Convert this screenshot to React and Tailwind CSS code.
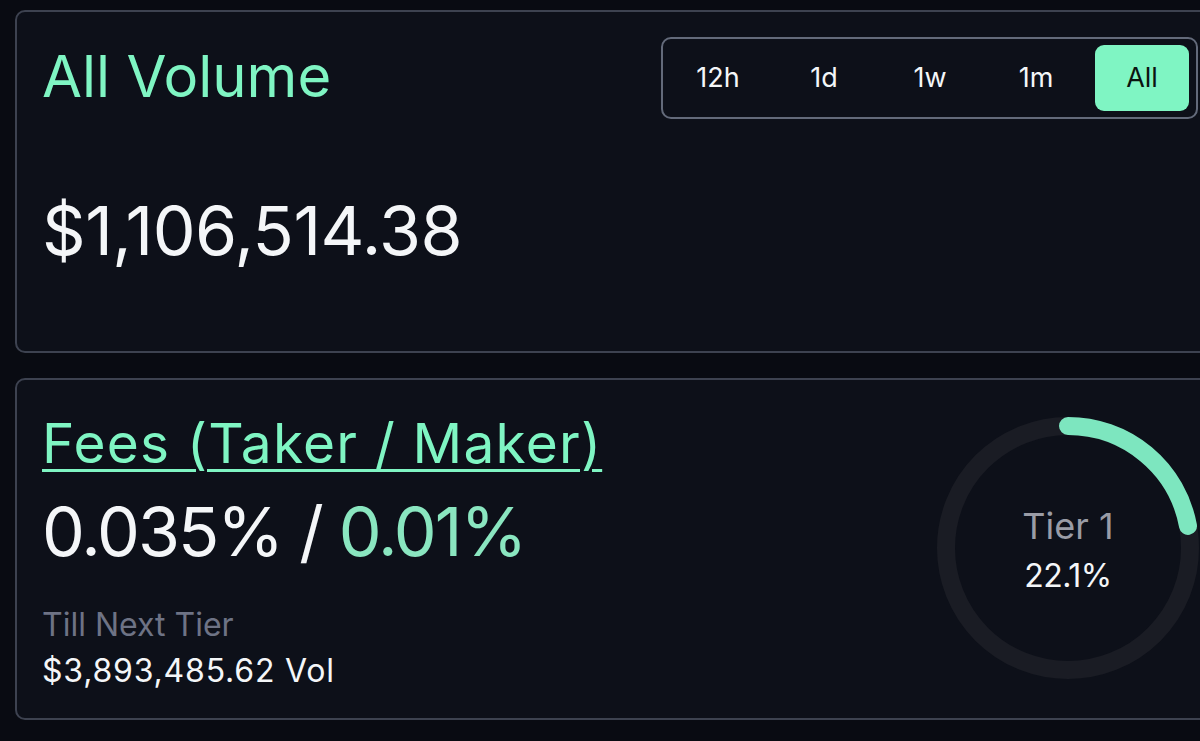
import React from 'react';

const ranges = ['12h', '1d', '1w', '1m', 'All'];

const TierRing = ({ pct }) => {
  const r = 122;
  const c = 2 * Math.PI * r;
  return (
    <div className="relative w-[262px] h-[262px] shrink-0">
      <svg width="262" height="262" viewBox="0 0 262 262" className="absolute inset-0">
        <circle cx="131" cy="131" r={r} fill="none" stroke="#1a1c24" strokeWidth="18" />
        <circle
          cx="131" cy="131" r={r} fill="none" stroke="#7de6bf" strokeWidth="18"
          strokeLinecap="round"
          strokeDasharray={`${(c * pct) / 100} ${c}`}
          transform="rotate(-90 131 131)"
        />
      </svg>
      <div className="absolute inset-0 flex flex-col items-center justify-center pt-[4px]">
        <p className="text-[36px] leading-none text-[#9a9ca6]">Tier 1</p>
        <p className="text-[32px] leading-none text-[#f4f6f8] mt-[16px] tracking-[-0.5px]">{pct}%</p>
      </div>
    </div>
  );
};

export default function App() {
  const active = 'All';

  return (
    <div className="w-[1200px] h-[741px] overflow-hidden bg-[#090b12] pt-[10px] pl-[15px]" style={{ fontFamily: 'Inter, "Noto Sans", sans-serif' }}>
      {/* Volume */}
      <div className="w-[1212px] h-[343px] rounded-[10px] border-2 border-[#3d4250] bg-[#0d1019] flex justify-between pl-[25px] pr-[27px]">
        <div className="flex flex-col">
          <h2 className="mt-[35px] text-[58px] leading-none text-[#7ff5c3]">All Volume</h2>
          <p className="mt-[91px] text-[68px] leading-none text-[#f4f6f8] tracking-[-0.5px]">$1,106,514.38</p>
        </div>
        <div className="mt-[25px] h-[82px] flex items-center gap-[12px] pl-[8px] pr-[7px] rounded-[10px] border-2 border-[#636a7a]">
          {ranges.map((r) => (
            <button
              key={r}
              className={`w-[94px] h-[66px] rounded-[9px] text-[27px] flex items-center justify-center ${
                r === active ? 'bg-[#7ff5c3] text-[#0b1410]' : 'text-[#f4f6f8]'
              }`}
            >
              {r}
            </button>
          ))}
        </div>
      </div>

      {/* Fees */}
      <div className="mt-[25px] w-[1212px] h-[342px] rounded-[10px] border-2 border-[#3d4250] bg-[#0d1019] flex justify-between pl-[25px] pr-[26px]">
        <div className="flex flex-col">
          <a className="mt-[36px] text-[55px] leading-none text-[#7ff5c3] underline decoration-[3px] underline-offset-[6px] tracking-[1.2px]">
            Fees (Taker / Maker)
          </a>
          <p className="mt-[26px] text-[68px] leading-none tracking-[-2px] text-[#f4f6f8]">
            0.035% <span className="text-[#f4f6f8]">/</span> <span className="text-[#8ae6c0]">0.01%</span>
          </p>
          <p className="mt-[44px] text-[32px] leading-none text-[#6e7385]">Till Next Tier</p>
          <p className="mt-[14px] text-[32px] leading-none text-[#f4f6f8] tracking-[0.8px]">$3,893,485.62 Vol</p>
        </div>
        <div className="mt-[37px]">
          <TierRing pct={22.1} />
        </div>
      </div>
    </div>
  );
}
